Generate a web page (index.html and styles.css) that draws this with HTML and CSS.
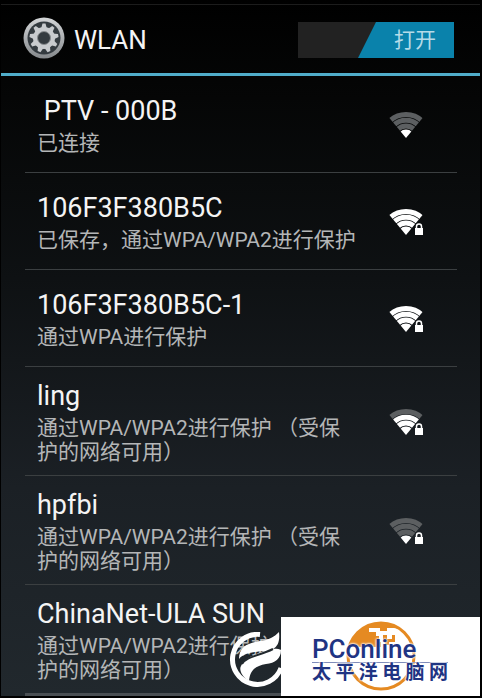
FILE: index.html
```html
<!DOCTYPE html>
<html lang="zh-CN">

<head>
    <meta charset="utf-8">
    <meta name="viewport" content="width=device-width, initial-scale=1">
    <title>WLAN</title>
    <link rel="stylesheet" href="styles.css">
</head>

<body>
    <!-- shared icon shapes -->
    <svg class="sprite" aria-hidden="true">
        <clipPath id="wedge">
            <path d="M17 27 L-1 5.200 V0 H35 V5.200 Z" />
        </clipPath>
        <g id="wifi-dot" clip-path="url(#wedge)"><circle cx="17" cy="27" r="8.400" /></g>
        <g id="arc1" class="arc" clip-path="url(#wedge)"><circle cx="17" cy="27" r="12" /></g>
        <g id="arc2" class="arc" clip-path="url(#wedge)"><circle cx="17" cy="27" r="17.700" /></g>
        <g id="arc3" class="arc" clip-path="url(#wedge)"><circle cx="17" cy="27" r="23.500" /></g>
        <g id="lock">
            <path d="M27.500 20 V18.500 A2.500 2.500 0 0 1 32.500 18.500 V20" fill="none" stroke="#fff" stroke-width="1.500" />
            <rect x="26" y="20" width="8" height="7" fill="#fff" />
        </g>
    </svg>

    <div class="screen">
        <header class="header">
            <svg class="gear" viewBox="0 0 42 42" aria-hidden="true">
                <defs>
                    <linearGradient id="metal" x1="0" y1="0" x2="0" y2="1">
                        <stop offset="0" stop-color="#d4d6d8" />
                        <stop offset="1" stop-color="#85898c" />
                    </linearGradient>
                </defs>
                <circle cx="21" cy="21" r="20.500" fill="url(#metal)" />
                <circle cx="21" cy="21" r="16.500" fill="#343b40" />
                <g fill="#c8cbce">
                    <circle cx="21" cy="21" r="11" />
                    <path id="tooth" d="M18 12 L19.500 6.500 H22.500 L24 12 Z" />
                    <use href="#tooth" transform="rotate(40 21 21)" />
                    <use href="#tooth" transform="rotate(80 21 21)" />
                    <use href="#tooth" transform="rotate(120 21 21)" />
                    <use href="#tooth" transform="rotate(160 21 21)" />
                    <use href="#tooth" transform="rotate(200 21 21)" />
                    <use href="#tooth" transform="rotate(240 21 21)" />
                    <use href="#tooth" transform="rotate(280 21 21)" />
                    <use href="#tooth" transform="rotate(320 21 21)" />
                </g>
                <circle cx="21" cy="21" r="6.500" fill="#343b40" stroke="#8a8e91" />
            </svg>
            <h1>WLAN</h1>
            <button class="switch" type="button" role="switch" aria-checked="true" aria-label="WLAN 打开">
                <span class="thumb">打开</span>
            </button>
        </header>

        <ul class="networks">
            <li class="network">
                <div class="info">
                    <h2>&nbsp;PTV - 000B</h2>
                    <p>已连接</p>
                </div>
                <svg class="signal" viewBox="0 0 36 28">
                    <g class="off"><use href="#arc3" /><use href="#arc2" /><use href="#arc1" /></g>
                    <use href="#wifi-dot" />
                </svg>
            </li>
            <li class="network">
                <div class="info">
                    <h2>106F3F380B5C</h2>
                    <p>已保存，通过WPA/WPA2进行保护</p>
                </div>
                <svg class="signal" viewBox="0 0 36 28">
                    <use href="#arc3" /><use href="#arc2" /><use href="#arc1" />
                    <use href="#wifi-dot" /><use href="#lock" />
                </svg>
            </li>
            <li class="network">
                <div class="info">
                    <h2>106F3F380B5C-1</h2>
                    <p>通过WPA进行保护</p>
                </div>
                <svg class="signal" viewBox="0 0 36 28">
                    <use href="#arc3" /><use href="#arc2" /><use href="#arc1" />
                    <use href="#wifi-dot" /><use href="#lock" />
                </svg>
            </li>
            <li class="network">
                <div class="info">
                    <h2>ling</h2>
                    <p>通过WPA/WPA2进行保护 （受保护的网络可用）</p>
                </div>
                <svg class="signal" viewBox="0 0 36 28">
                    <g class="off"><use href="#arc3" /></g>
                    <use href="#arc2" /><use href="#arc1" />
                    <use href="#wifi-dot" /><use href="#lock" />
                </svg>
            </li>
            <li class="network">
                <div class="info">
                    <h2>hpfbi</h2>
                    <p>通过WPA/WPA2进行保护 （受保护的网络可用）</p>
                </div>
                <svg class="signal" viewBox="0 0 36 28">
                    <g class="off"><use href="#arc3" /><use href="#arc2" /><use href="#arc1" /></g>
                    <use href="#wifi-dot" /><use href="#lock" />
                </svg>
            </li>
            <li class="network">
                <div class="info">
                    <h2>ChinaNet-ULA SUN</h2>
                    <p>通过WPA/WPA2进行保护 （受保护的网络可用）</p>
                </div>
                <svg class="signal" viewBox="0 0 36 28">
                    <use href="#arc3" /><use href="#arc2" /><use href="#arc1" />
                    <use href="#wifi-dot" /><use href="#lock" />
                </svg>
            </li>
        </ul>

        <!-- site logos over the bottom right corner -->
        <div class="brand">
            <svg class="globe" viewBox="0 0 72 72" aria-hidden="true">
                <circle cx="36" cy="36" r="33" fill="#fff" stroke="#e58a22" stroke-width="3" />
                <path d="M5 27 A33 33 0 0 1 36 3 Q47 3 55 9 L49 8 H42 V11 H35 V8 H24 V12 H31 V16 H34 V22 H38 V15 H42 V19 H47 V15 H50 V22 H44 V25 H40 V22 H36 V27 Z" fill="#e58a22" />
            </svg>
            <div class="brand-text">
                <strong>PConline</strong>
                <span class="brand-cn"><span>太</span><span>平</span><span>洋</span><span>电</span><span>脑</span><span>网</span></span>
            </div>
        </div>
        <svg class="leaf" viewBox="0 0 56 56" aria-hidden="true">
            <path d="M30 2.500 A25 25 0 1 0 51 36" fill="none" stroke="#fff" stroke-width="5" />
            <path d="M9 27 C9 15 17 11 30 9 C39 8 44 5 49 0 C50 9 48 14 43 17 C49 16 51 18 51 18 C51 27 45 31 36 32 C25 34 20 38 19 49 C11 44 9 37 11 34 C15 25 25 23 34 19 C23 20 14 21 9 27 Z" fill="#fff" />
            <path d="M12 32 C17 24 29 24 43 17" fill="none" stroke="#22292e" stroke-width="2" />
        </svg>
    </div>
</body>

</html>
```
FILE: styles.css
```css
* {
    box-sizing: border-box;
}

body {
    margin: 0;
    padding: 0 2px 2px 1px;
    background: #000;
    color: #f4f4f4;
    font-family: Roboto, "Noto Sans CJK SC", sans-serif;
}

h1,
h2,
p {
    margin: 0;
    font-weight: 400;
}

.sprite {
    position: absolute;
    width: 0;
    height: 0;
}

.screen {
    position: relative;
    padding-top: 4px;
    background: linear-gradient(#000 0%, #050606 14%, #0e1113 40%, #1b2025 70%, #21282d 100%);
}

/* title bar */
.header {
    display: flex;
    align-items: center;
    height: 72px;
    padding: 2px 26px 0 22px;
    border-top: 1px solid #1c1c1c;
    border-bottom: 3px solid #50adca;
}

.gear {
    width: 42px;
    height: 42px;
    margin: 0 9px 4px 0;
}

h1 {
    flex: 1;
    font-size: 26px;
    line-height: 32px;
}

.switch {
    display: flex;
    justify-content: flex-end;
    width: 156px;
    height: 36px;
    padding: 0;
    border: 0;
    background: #222;
    font: inherit;
}

.thumb {
    width: 96px;
    padding-left: 36px;
    background: #0a82ab;
    clip-path: polygon(18px 0, 100% 0, 100% 100%, 0 100%);
    color: #b5dbe8;
    font-size: 21px;
    line-height: 36px;
    text-align: left;
}

/* network list */
.networks {
    margin: 0;
    padding: 0 23px 0 24px;
    list-style: none;
}

.network {
    display: flex;
    align-items: center;
    min-height: 97px;
    padding: 9px 32px 11px 12px;
    border-bottom: 1px solid #3b3f41;
}

.network:last-child {
    border-bottom: 3px solid #4a4f53;
}

.info {
    flex: 1;
}

h2 {
    font-size: 27px;
    line-height: 40px;
}

.info p {
    color: #b4b6b7;
    font-size: 21px;
    line-height: 24px;
}

.signal {
    width: 36px;
    height: 28px;
    margin: 3px 0 0 30px;
    fill: #fff;
    stroke: #fff;
    stroke-width: 0;
}

.signal .off {
    stroke: #5c5f61;
}

.arc {
    fill: none;
    stroke-width: 5px;
}

/* logos */
.brand {
    position: absolute;
    right: 0;
    bottom: 0;
    width: 199px;
    height: 79px;
    padding: 20px 32px 0 31px;
    overflow: hidden;
    background: #fff;
    color: #1f3483;
}

.globe {
    position: absolute;
    top: 3px;
    left: 64px;
    width: 72px;
    height: 72px;
}

.brand-text {
    position: relative;
    text-shadow: 0 0 2px #fff, 0 0 2px #fff, 0 0 3px #fff;
}

.brand-text strong {
    display: block;
    font-size: 26px;
    font-weight: 500;
    line-height: 25px;
}

.brand-cn {
    display: flex;
    justify-content: space-between;
    border-top: 1px solid #7f8cba;
    font-size: 19px;
    font-weight: 700;
    line-height: 20px;
}

.leaf {
    position: absolute;
    right: 194px;
    bottom: 8px;
    width: 56px;
    height: 56px;
}
```
